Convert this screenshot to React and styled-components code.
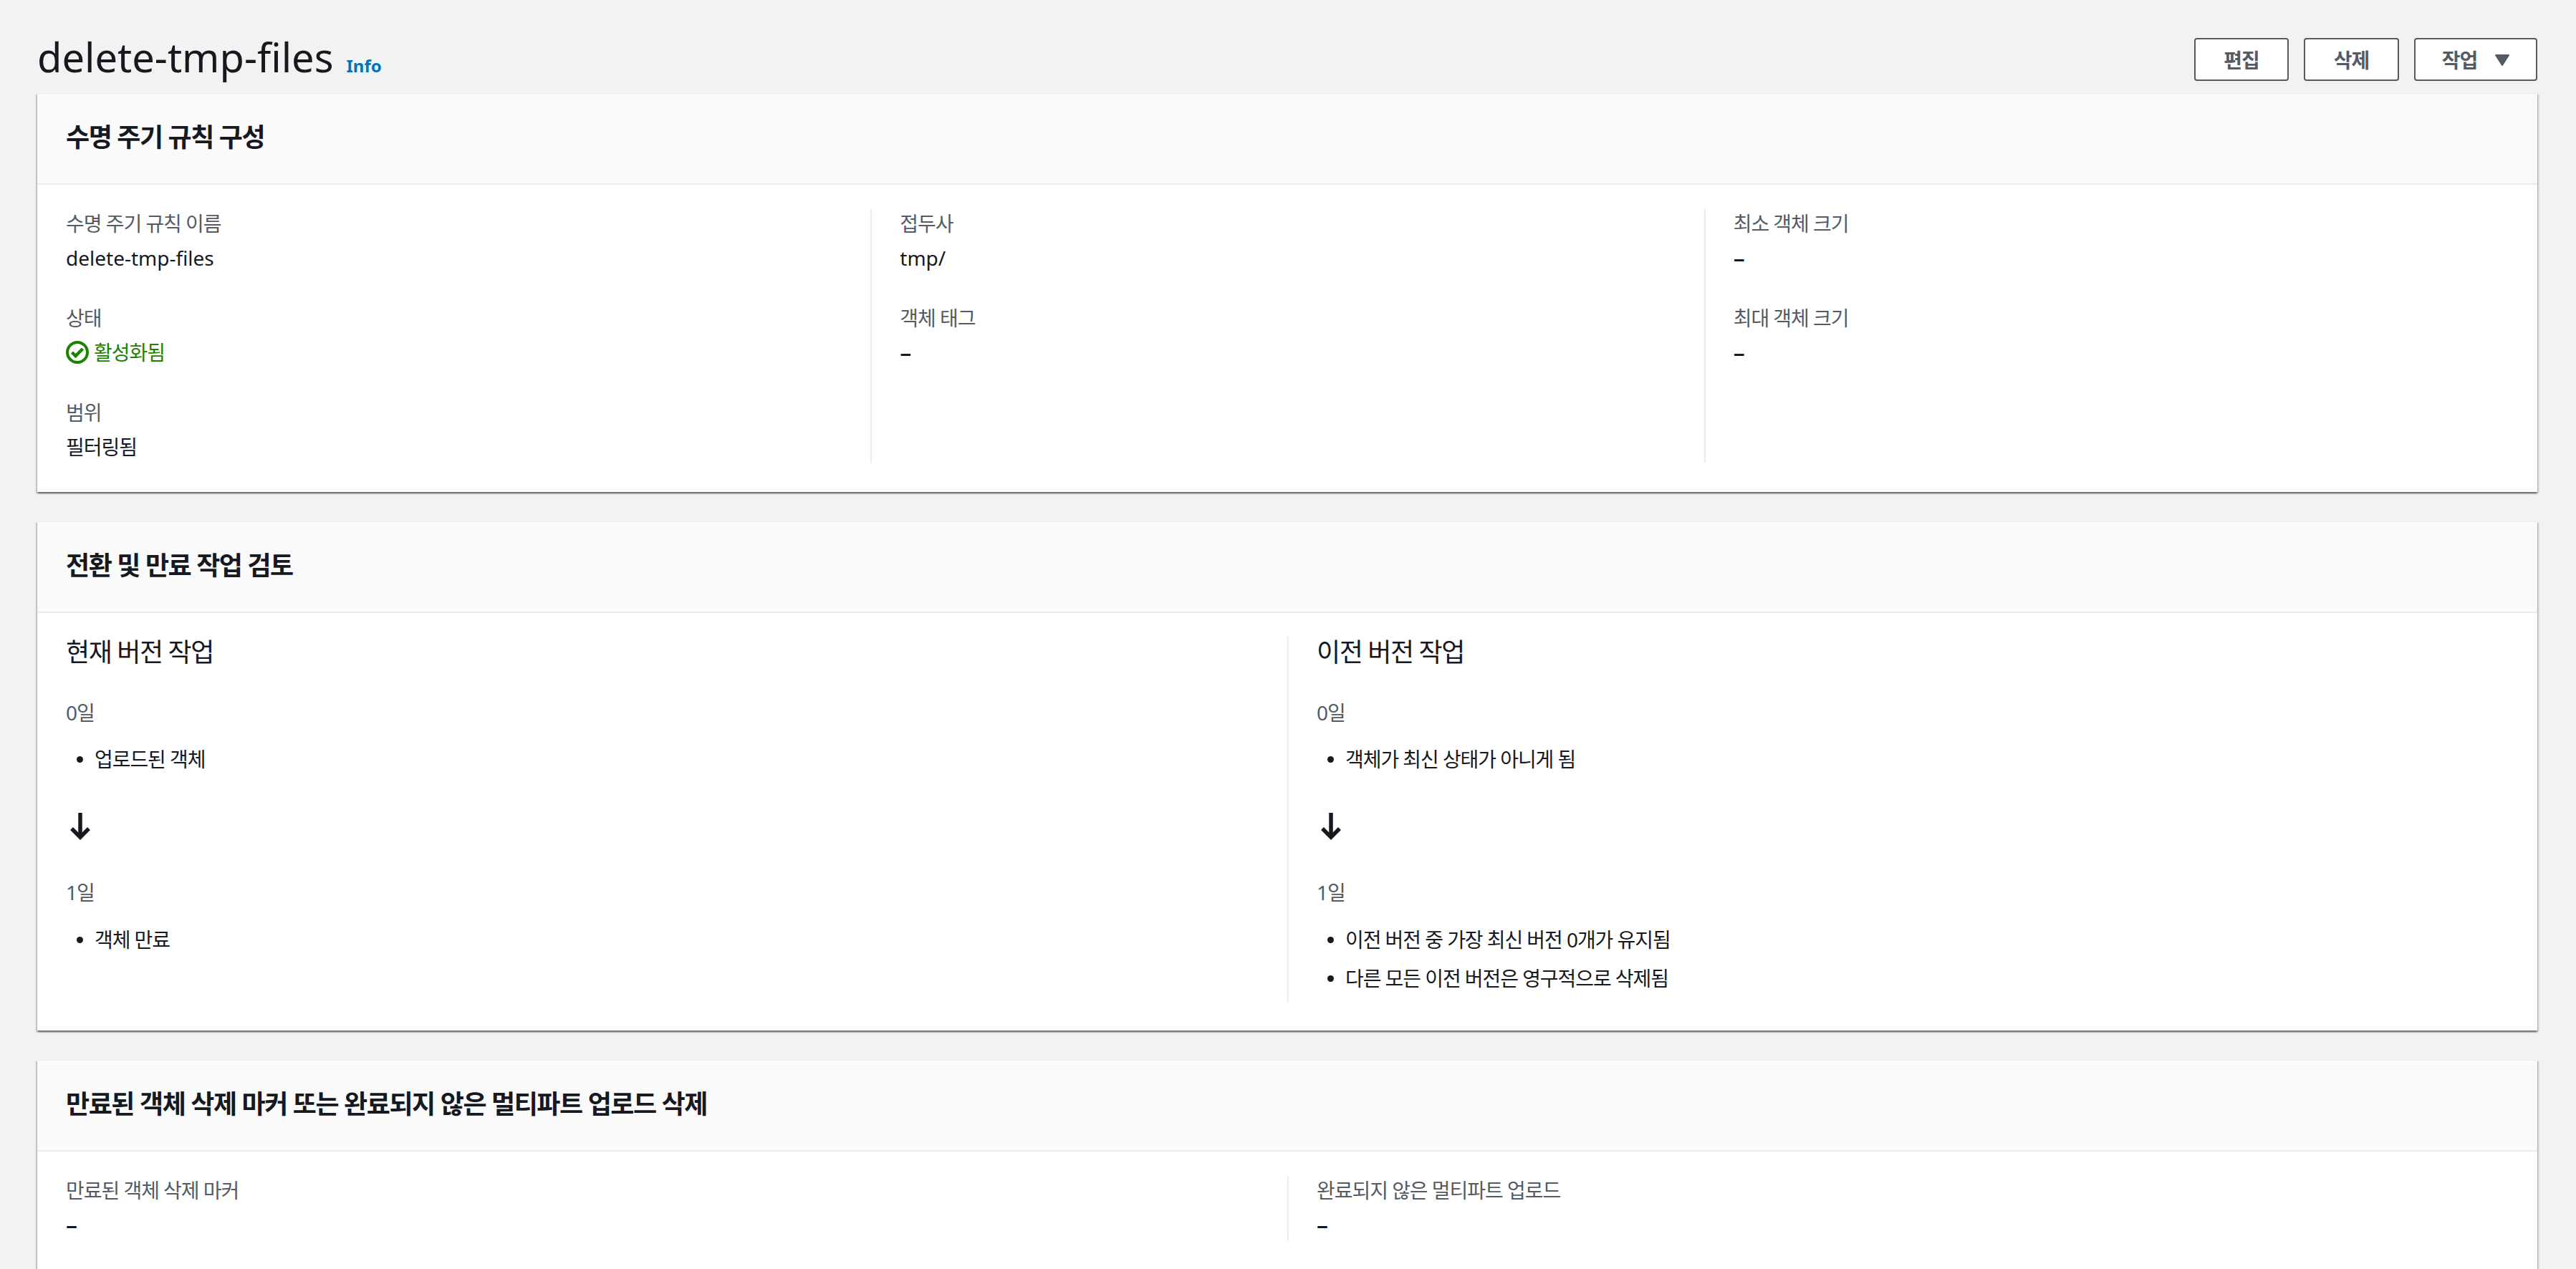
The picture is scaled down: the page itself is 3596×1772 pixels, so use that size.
import React from "react";
import styled, { createGlobalStyle } from "styled-components";

const fontStack = `"Noto Sans", "Noto Sans CJK KR", sans-serif`;

const GlobalStyle = createGlobalStyle`
  html, body {
    margin: 0;
    padding: 0;
    height: 1772px;
    overflow: hidden;
    background: #f2f2f2;
  }
  body {
    font-family: ${fontStack};
    font-size: 28px;
    line-height: 40px;
    color: #16191f;
  }
`;

const Page = styled.div`
  padding: 53px 54px 0 52px;
`;

const PageHeader = styled.header`
  display: flex;
  justify-content: space-between;
  align-items: flex-start;
  margin-bottom: 17px;
`;

const TitleGroup = styled.div`
  display: flex;
  align-items: baseline;
  gap: 18px;
`;

const Title = styled.h1`
  margin: 0;
  font-size: 56px;
  line-height: 52px;
  font-weight: 400;
`;

const InfoLink = styled.a`
  font-size: 24px;
  font-weight: 700;
  color: #0073bb;
`;

const Actions = styled.div`
  display: flex;
  gap: 21px;
`;

const Button = styled.button`
  display: flex;
  align-items: center;
  justify-content: center;
  gap: 25px;
  box-sizing: border-box;
  width: ${(p) => p.$width}px;
  height: 60px;
  padding: 2px 0 0;
  background: #fff;
  border: 2px solid #545b64;
  border-radius: 4px;
  color: #545b64;
  font: 700 28px/40px ${fontStack};
  letter-spacing: -0.035em;
`;

const Card = styled.section`
  background: #fff;
  margin-bottom: 41px;
  box-shadow: 0 2px 2px 0 rgba(0, 28, 36, 0.5), 2px 2px 2px 0 rgba(0, 28, 36, 0.15),
    -2px 2px 2px 0 rgba(0, 28, 36, 0.15);
`;

const CardHeader = styled.h2`
  box-sizing: border-box;
  height: 128px;
  margin: 0;
  padding: 0 40px 4px;
  display: flex;
  align-items: center;
  background: #fafafa;
  border-top: 1px solid #eaeded;
  border-bottom: 2px solid #eaeded;
  font-size: 36px;
  line-height: 44px;
  font-weight: 700;
  letter-spacing: -0.04em;
`;

const Columns = styled.div`
  display: grid;
  grid-template-columns: repeat(${(p) => p.$count}, 1fr);
  padding: ${(p) => p.$top}px 0 ${(p) => p.$bottom}px;
`;

const Column = styled.div`
  padding: 0 40px;
  & + & {
    border-left: 2px solid #eaeded;
    padding-left: 39px;
  }
`;

const Field = styled.div`
  margin-bottom: 44px;
  &:last-child {
    margin-bottom: 2px;
  }
`;

const Label = styled.div`
  color: #545b64;
  letter-spacing: -0.037em;
  margin-bottom: 8px;
`;

const Value = styled.div`
  letter-spacing: ${(p) => (p.$korean ? "-0.037em" : "normal")};
`;

const Dash = styled.div`
  font-size: 32px;
  font-weight: 500;
`;

const Status = styled.div`
  display: flex;
  align-items: center;
  gap: 7px;
  color: #1d8102;
  letter-spacing: -0.037em;
`;

const SubHeading = styled.h3`
  margin: 0;
  font-size: 36px;
  line-height: 44px;
  font-weight: 400;
  letter-spacing: -0.04em;
`;

const Day = styled.div`
  color: #545b64;
  letter-spacing: -0.035em;
  margin-top: ${(p) => p.$top}px;
`;

const Items = styled.ul`
  list-style: none;
  margin: ${(p) => p.$top}px 0 0;
  padding: 0;
  display: flex;
  flex-direction: column;
  gap: 14px;
`;

const Item = styled.li`
  display: flex;
  align-items: center;
  letter-spacing: -0.038em;
  &::before {
    content: "";
    width: 9px;
    height: 9px;
    margin: 0 16px 0 15px;
    border-radius: 50%;
    background: #16191f;
  }
`;

const ArrowBox = styled.div`
  height: 40px;
  margin-top: 53px;
`;

const ActionBody = styled.div`
  padding-bottom: 13px;
`;

const MarkerBody = styled.div`
  padding-bottom: 3px;
`;

const CheckIcon = () => (
  <svg width="32" height="32" viewBox="0 0 32 32" fill="none" stroke="#1d8102" strokeWidth="4">
    <circle cx="16" cy="16" r="14" />
    <path d="M8.5 16l5 5 10-10" strokeWidth="4.5" />
  </svg>
);

const CaretIcon = () => (
  <svg width="20" height="16" viewBox="0 0 20 16">
    <path d="M1 1h18L10 15z" fill="#545b64" stroke="#545b64" strokeWidth="2" strokeLinejoin="round" />
  </svg>
);

const ArrowIcon = () => (
  <svg width="40" height="40" viewBox="0 0 40 40" fill="none" stroke="#16191f" strokeWidth="5.5">
    <path d="M20 2v34" />
    <path d="M8 24l12 12 12-12" />
  </svg>
);

const ActionColumn = ({ heading, first, second }) => (
  <Column>
    <ActionBody>
      <SubHeading>{heading}</SubHeading>
      <Day $top={42}>0일</Day>
      <Items $top={25}>
        {first.map((t) => (
          <Item key={t}>{t}</Item>
        ))}
      </Items>
      <ArrowBox>
        <ArrowIcon />
      </ArrowBox>
      <Day $top={53}>1일</Day>
      <Items $top={26}>
        {second.map((t) => (
          <Item key={t}>{t}</Item>
        ))}
      </Items>
    </ActionBody>
  </Column>
);

const App = () => (
  <Page>
    <GlobalStyle />
    <PageHeader>
      <TitleGroup>
        <Title>delete-tmp-files</Title>
        <InfoLink>Info</InfoLink>
      </TitleGroup>
      <Actions>
        <Button $width={132}>편집</Button>
        <Button $width={133}>삭제</Button>
        <Button $width={172}>
          작업
          <CaretIcon />
        </Button>
      </Actions>
    </PageHeader>

    <Card>
      <CardHeader>수명 주기 규칙 구성</CardHeader>
      <Columns $count={3} $top={34} $bottom={41}>
        <Column>
          <Field>
            <Label>수명 주기 규칙 이름</Label>
            <Value>delete-tmp-files</Value>
          </Field>
          <Field>
            <Label>상태</Label>
            <Status>
              <CheckIcon />
              활성화됨
            </Status>
          </Field>
          <Field>
            <Label>범위</Label>
            <Value $korean>필터링됨</Value>
          </Field>
        </Column>
        <Column>
          <Field>
            <Label>접두사</Label>
            <Value>tmp/</Value>
          </Field>
          <Field>
            <Label>객체 태그</Label>
            <Dash>–</Dash>
          </Field>
        </Column>
        <Column>
          <Field>
            <Label>최소 객체 크기</Label>
            <Dash>–</Dash>
          </Field>
          <Field>
            <Label>최대 객체 크기</Label>
            <Dash>–</Dash>
          </Field>
        </Column>
      </Columns>
    </Card>

    <Card>
      <CardHeader>전환 및 만료 작업 검토</CardHeader>
      <Columns $count={2} $top={33} $bottom={40}>
        <ActionColumn heading="현재 버전 작업" first={["업로드된 객체"]} second={["객체 만료"]} />
        <ActionColumn
          heading="이전 버전 작업"
          first={["객체가 최신 상태가 아니게 됨"]}
          second={["이전 버전 중 가장 최신 버전 0개가 유지됨", "다른 모든 이전 버전은 영구적으로 삭제됨"]}
        />
      </Columns>
    </Card>

    <Card>
      <CardHeader>만료된 객체 삭제 마커 또는 완료되지 않은 멀티파트 업로드 삭제</CardHeader>
      <Columns $count={2} $top={34} $bottom={41}>
        <Column>
          <MarkerBody>
            <Label>만료된 객체 삭제 마커</Label>
            <Dash>–</Dash>
          </MarkerBody>
        </Column>
        <Column>
          <MarkerBody>
            <Label>완료되지 않은 멀티파트 업로드</Label>
            <Dash>–</Dash>
          </MarkerBody>
        </Column>
      </Columns>
    </Card>
  </Page>
);

export default App;
